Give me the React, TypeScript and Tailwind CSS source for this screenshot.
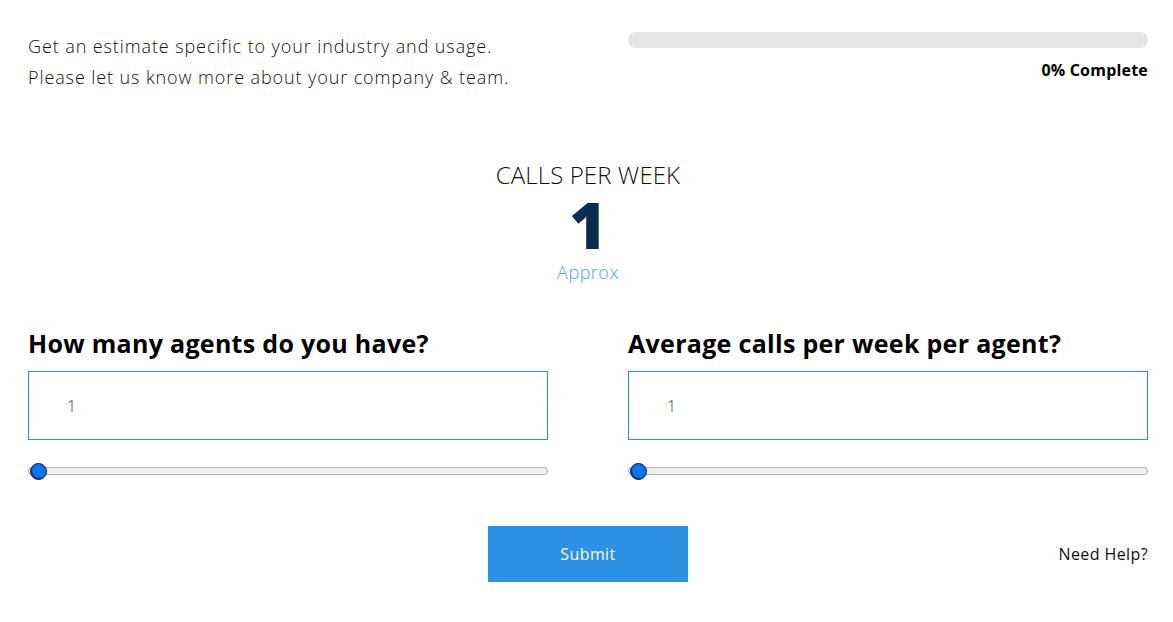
import React from "react";

const font = { fontFamily: '"Open Sans", "Liberation Sans", sans-serif' };

function Slider() {
  return (
    <div className="relative mt-[23px] h-[16px] w-full">
      <div className="absolute left-0 right-0 top-[4px] h-[8px] rounded-full border border-[#b2b2b2] bg-[#efefef]" />
      <div className="absolute left-[2px] top-0 h-[17px] w-[17px] rounded-full border border-[#1a1a1a] bg-[#0075ff] shadow-[inset_1px_-1px_0_#0b3a7a]" />
    </div>
  );
}

function Field({ label }: { label: string }) {
  return (
    <div className="flex flex-col">
      <h2 className="text-[25px] font-bold leading-[30px] tracking-[0.3px] text-black">{label}</h2>
      <div className="mt-[13px] flex h-[69px] items-center border border-[#2a8de8] pl-[38px] text-[16px] font-light text-[#444]">
        1
      </div>
      <Slider />
    </div>
  );
}

export default function App() {
  return (
    <div className="min-h-[622px] w-full bg-white pl-[28px] pr-[25px] text-black" style={font}>
      <div className="grid grid-cols-2 gap-[80px] pt-[32px]">
        <div className="-mt-[1px] text-[18px] font-light leading-[31px] tracking-[0.9px] text-[#111]">
          <p>Get an estimate specific to your industry and usage.</p>
          <p>Please let us know more about your company &amp; team.</p>
        </div>
        <div className="flex flex-col items-end">
          <div className="h-[16px] w-full rounded-full bg-[#e5e5e5]" />
          <div className="mt-[10px] text-[16px] font-bold tracking-[0.2px]">0% Complete</div>
        </div>
      </div>

      <div className="mt-[67px] flex flex-col items-center">
        <div className="text-[24px] font-light leading-[30px] tracking-[0.1px] text-[#111]">CALLS PER WEEK</div>
        <div className="mt-[9px] text-[64px] font-extrabold leading-[52px] text-[#0b2e50]">1</div>
        <div className="mt-[9px] text-[18px] font-light leading-[24px] tracking-[0.5px] text-[#4a9ff0]">Approx</div>
      </div>

      <div className="mt-[44px] grid grid-cols-2 gap-[80px]">
        <Field label="How many agents do you have?" />
        <Field label="Average calls per week per agent?" />
      </div>

      <div className="mt-[47px] grid grid-cols-3 items-center">
        <div />
        <div className="flex justify-center">
          <button className="h-[56px] w-[200px] bg-[#2d91e6] text-[16px] font-medium tracking-[0.4px] text-white">Submit</button>
        </div>
        <div className="text-right text-[16px] tracking-[0.4px] text-[#111]">Need Help?</div>
      </div>
    </div>
  );
}
